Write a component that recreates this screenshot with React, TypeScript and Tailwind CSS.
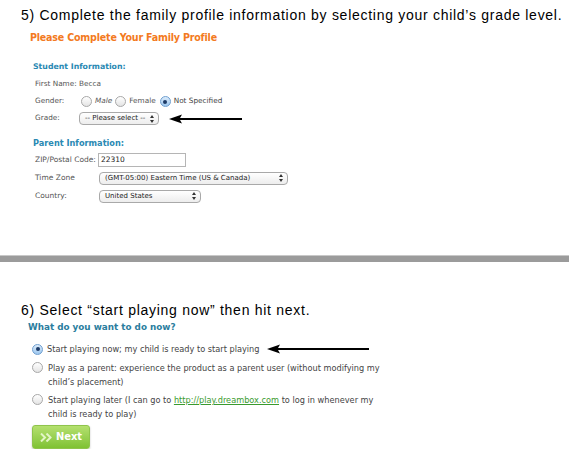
import React from "react";

const formFont = { fontFamily: '"DejaVu Sans", Verdana, sans-serif' };
const headFont = { fontFamily: '"Liberation Sans", Arial, sans-serif' };

function Radio({ checked = false }: { checked?: boolean }) {
  return (
    <span
      className={`inline-flex items-center justify-center w-[11px] h-[11px] rounded-full border shrink-0 ${
        checked
          ? "border-[#6f9fd0] bg-gradient-to-b from-[#dcecfb] to-[#9cc6ee]"
          : "border-[#a8a8a8] bg-gradient-to-b from-white to-[#e4e4e4]"
      }`}
    >
      {checked && <span className="w-[4px] h-[4px] rounded-full bg-[#1d3a66]" />}
    </span>
  );
}

function SelectBox({ label, width }: { label: string; width: string }) {
  return (
    <div
      className={`${width} h-[13px] flex items-center justify-between rounded-[4px] border border-[#a9a9a9] bg-gradient-to-b from-white to-[#ededed] pl-[5px] pr-[4px] text-[7px] text-[#222]`}
    >
      <span className="whitespace-nowrap">{label}</span>
      <svg width="4" height="8" viewBox="0 0 4 8">
        <path d="M0 3 L2 0 L4 3 Z M0 5 L2 8 L4 5 Z" fill="#333" />
      </svg>
    </div>
  );
}

function Arrow({ length }: { length: number }) {
  return (
    <svg width={length} height="10" viewBox={`0 0 ${length} 10`}>
      <path d={`M0 5 L13 0.5 L11 4 L${length} 4 L${length} 6 L11 6 L13 9.5 Z`} fill="#000" />
    </svg>
  );
}

export default function App() {
  return (
    <div className="w-[569px] h-[449px] bg-white overflow-hidden text-[#333]">
      {/* Step 5 */}
      <div className="pl-[21px]">
        <div
          className="h-[30px] flex items-center whitespace-nowrap text-[14px] text-black tracking-[0.72px]"
          style={headFont}
        >
          5) Complete the family profile information by selecting your child’s grade level.
        </div>
      </div>
      <div className="pl-[30px]">
        <div
          className="h-[15px] flex items-center whitespace-nowrap text-[10.6px] font-bold text-[#f37a21] tracking-[-0.2px]"
          style={{ fontFamily: '"DejaVu Sans Condensed", "Liberation Sans", sans-serif' }}
        >
          Please Complete Your Family Profile
        </div>
      </div>

      <div className="pl-[33px] pt-[15px]" style={formFont}>
        <div className="h-[14px] flex items-center text-[7.8px] font-bold text-[#2a89b3]">
          Student Information:
        </div>
        <div className="pl-[2px] pt-[2px] text-[7.3px] text-[#555]">
          <div className="h-[17px] flex items-center">First Name: Becca</div>
          <div className="h-[17px] flex items-center">
            <span className="w-[46px]">Gender:</span>
            <span className="flex items-center gap-[3px]">
              <Radio /> <span className="italic">Male</span>
            </span>
            <span className="flex items-center gap-[3px] ml-[3px]">
              <Radio /> <span>Female</span>
            </span>
            <span className="flex items-center gap-[3px] ml-[4px]">
              <Radio checked /> <span className="text-[#444]">Not Specified</span>
            </span>
          </div>
          <div className="h-[17px] flex items-center">
            <span className="w-[44px]">Grade:</span>
            <SelectBox label="-- Please select --" width="w-[80px]" />
            <span className="ml-[10px] flex">
              <Arrow length={73} />
            </span>
          </div>
        </div>

        <div className="mt-[9px] h-[14px] flex items-center text-[8.2px] font-bold text-[#2a89b3]">
          Parent Information:
        </div>
        <div className="pl-[2px] pt-[1px] text-[7.5px] text-[#555]">
          <div className="h-[18px] flex items-center">
            <span className="w-[63px]">ZIP/Postal Code:</span>
            <div className="w-[88px] h-[14px] border border-[#b5b5b5] bg-white flex items-center pl-[2px] text-[#222]">
              22310
            </div>
          </div>
          <div className="h-[18px] flex items-center">
            <span className="w-[64px]">Time Zone</span>
            <SelectBox label="(GMT-05:00) Eastern Time (US & Canada)" width="w-[189px]" />
          </div>
          <div className="h-[18px] flex items-center">
            <span className="w-[64px]">Country:</span>
            <SelectBox label="United States" width="w-[102px]" />
          </div>
        </div>
      </div>

      {/* Divider band */}
      <div className="mt-[50px] h-[7px] border-t border-[#c8c8c8] bg-[#9b9b9b]" />

      {/* Step 6 */}
      <div className="pl-[21px] pt-[38px]">
        <div
          className="h-[20px] flex items-center whitespace-nowrap text-[14px] text-black tracking-[0.72px]"
          style={headFont}
        >
          6) Select “start playing now” then hit next.
        </div>
      </div>
      <div className="pl-[28px]" style={formFont}>
        <div className="mt-[1px] h-[14px] flex items-center text-[8.8px] font-bold text-[#2a7d9e]">
          What do you want to do now?
        </div>
        <div className="pl-[4px] text-[8.2px] text-[#444]">
          <div className="mt-[7px] h-[14px] flex items-center">
            <Radio checked />
            <span className="ml-[4px]">Start playing now; my child is ready to start playing</span>
            <span className="ml-[8px] flex">
              <Arrow length={102} />
            </span>
          </div>
          <div className="mt-[5px] flex items-start">
            <span className="mt-[1px]">
              <Radio />
            </span>
            <div className="ml-[5px] leading-[14px]">
              <div>Play as a parent: experience the product as a parent user (without modifying my</div>
              <div>child’s placement)</div>
            </div>
          </div>
          <div className="mt-[4px] flex items-start">
            <span className="mt-[1px]">
              <Radio />
            </span>
            <div className="ml-[5px] leading-[14px]">
              <div>
                Start playing later (I can go to{" "}
                <span className="text-[#3a9a2e] underline">http://play.dreambox.com</span> to log in
                whenever my
              </div>
              <div>child is ready to play)</div>
            </div>
          </div>
          <div className="mt-[4px] w-[58px] h-[24px] rounded-[3px] border border-[#8fc44c] bg-gradient-to-b from-[#b4e06e] to-[#7fc232] shadow-[0_1px_2px_rgba(0,0,0,0.25)] flex items-center justify-center gap-[3px]">
            <svg width="13" height="9" viewBox="0 0 13 9">
              <path d="M1 0.5 L5 4.5 L1 8.5" stroke="#e3f5c6" strokeWidth="2" fill="none" />
              <path d="M6.5 0.5 L10.5 4.5 L6.5 8.5" stroke="#e3f5c6" strokeWidth="2" fill="none" />
            </svg>
            <span
              className="text-white font-bold text-[11px]"
              style={{ fontFamily: '"DejaVu Sans Condensed", sans-serif' }}
            >
              Next
            </span>
          </div>
        </div>
      </div>
    </div>
  );
}
